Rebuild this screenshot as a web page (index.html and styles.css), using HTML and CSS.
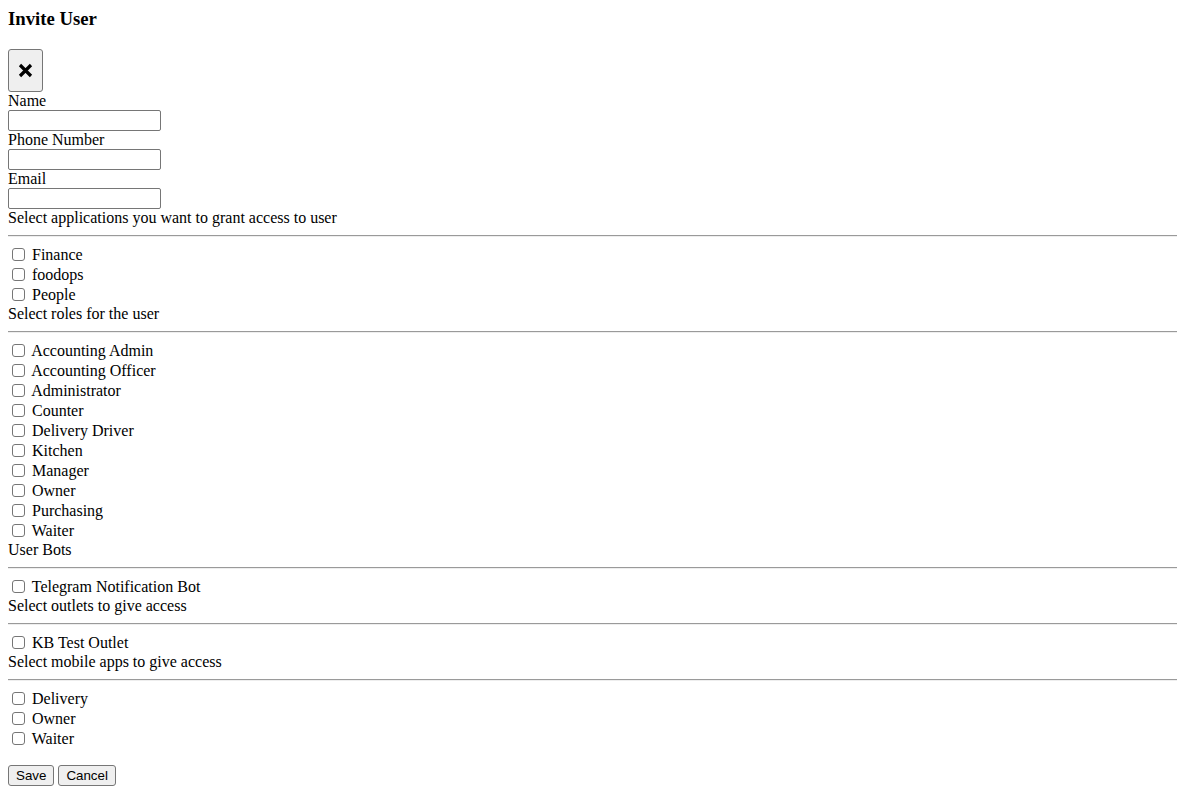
FILE: index.html
```html
<!DOCTYPE html>
<html>
<head>
<meta charset="utf-8">
<title>Invite User</title>
<link rel="stylesheet" href="styles.css">
</head>
<body>
<div class="modal">
  <h3 class="title">Invite User</h3>
  <button class="close-btn" type="button" aria-label="Close">
    <svg width="15" height="15" viewBox="0 0 15 15"><path d="M2 2 L13 13 M13 2 L2 13" stroke="#000" stroke-width="3.2" stroke-linecap="butt" fill="none"/></svg>
  </button>
  <form class="form">
    <label class="field-label">Name</label>
    <input class="text-input" type="text">
    <label class="field-label">Phone Number</label>
    <input class="text-input" type="text">
    <label class="field-label">Email</label>
    <input class="text-input" type="text">

    <div class="section-title">Select applications you want to grant access to user</div>
    <div class="divider"></div>
    <div class="check-row"><input class="check" type="checkbox"> <label>Finance</label></div>
    <div class="check-row"><input class="check" type="checkbox"> <label>foodops</label></div>
    <div class="check-row"><input class="check" type="checkbox"> <label>People</label></div>

    <div class="section-title">Select roles for the user</div>
    <div class="divider"></div>
    <div class="check-row"><input class="check" type="checkbox"> <label>Accounting Admin</label></div>
    <div class="check-row"><input class="check" type="checkbox"> <label>Accounting Officer</label></div>
    <div class="check-row"><input class="check" type="checkbox"> <label>Administrator</label></div>
    <div class="check-row"><input class="check" type="checkbox"> <label>Counter</label></div>
    <div class="check-row"><input class="check" type="checkbox"> <label>Delivery Driver</label></div>
    <div class="check-row"><input class="check" type="checkbox"> <label>Kitchen</label></div>
    <div class="check-row"><input class="check" type="checkbox"> <label>Manager</label></div>
    <div class="check-row"><input class="check" type="checkbox"> <label>Owner</label></div>
    <div class="check-row"><input class="check" type="checkbox"> <label>Purchasing</label></div>
    <div class="check-row"><input class="check" type="checkbox"> <label>Waiter</label></div>

    <div class="section-title">User Bots</div>
    <div class="divider"></div>
    <div class="check-row"><input class="check" type="checkbox"> <label>Telegram Notification Bot</label></div>

    <div class="section-title">Select outlets to give access</div>
    <div class="divider"></div>
    <div class="check-row"><input class="check" type="checkbox"> <label>KB Test Outlet</label></div>

    <div class="section-title">Select mobile apps to give access</div>
    <div class="divider"></div>
    <div class="check-row"><input class="check" type="checkbox"> <label>Delivery</label></div>
    <div class="check-row"><input class="check" type="checkbox"> <label>Owner</label></div>
    <div class="check-row"><input class="check" type="checkbox"> <label>Waiter</label></div>

    <div class="actions">
      <button type="button" class="action-btn">Save</button>
      <button type="button" class="action-btn">Cancel</button>
    </div>
  </form>
</div>
</body>
</html>
```

FILE: styles.css
```css
html {
  overflow: hidden;
}

body {
  margin: 8px;
  font-family: "Liberation Serif", "Times New Roman", serif;
  font-size: 16px;
  color: #000;
  background: #fff;
}

.title {
  margin: 0 0 18.72px 0;
  font-size: 18.72px;
  font-weight: bold;
}

.close-btn {
  display: flex;
  align-items: center;
  justify-content: center;
  width: 35px;
  height: 43px;
  padding: 0;
  margin: 0;
  background: #efefef;
  border: 1px solid #767676;
  border-radius: 3px;
}

.form {
  margin: 0;
}

.field-label {
  display: block;
}

.text-input {
  display: block;
  box-sizing: border-box;
  width: 153px;
  height: 21px;
  margin: 0;
  border: 1px solid #767676;
  border-radius: 2px;
  background: #fff;
}

.section-title {
  display: block;
}

.divider {
  height: 0;
  margin: 8px -8px 8px 0;
  border-top: 1px solid #9a9a9a;
  border-bottom: 1px solid #eeeeee;
}

.check-row {
  display: block;
  height: 20px;
  line-height: 20px;
}

.check {
  appearance: none;
  -webkit-appearance: none;
  box-sizing: border-box;
  width: 13px;
  height: 13px;
  margin: 0 3px 0 4px;
  border: 1px solid #767676;
  border-radius: 3px;
  background: #fff;
  vertical-align: -1px;
}

.actions {
  margin-top: 16px;
}

.action-btn {
  font-family: "Liberation Sans", Arial, sans-serif;
  font-size: 13.33px;
  background: #efefef;
  border: 1px solid #767676;
  border-radius: 3px;
  padding: 1px 7px;
  height: 21px;
  margin: 0;
}
```
